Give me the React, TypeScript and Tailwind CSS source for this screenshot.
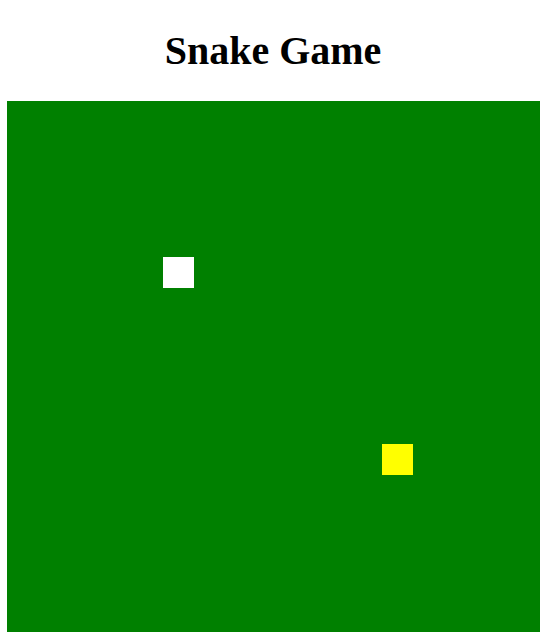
export default function App() {
  return (
    <div className="w-[540px] h-[632px] overflow-hidden bg-white">
      <div className="h-[101px] flex items-center justify-center pl-[6px]">
        <h1
          className="text-[40px] font-bold text-black leading-none"
          style={{ fontFamily: '"Liberation Serif", "Times New Roman", serif' }}
        >
          Snake Game
        </h1>
      </div>
      <div className="relative ml-[7px] w-[600px] h-[600px] bg-[#008000]">
        {/* snake head */}
        <div className="absolute left-[156px] top-[156px] w-[31px] h-[31px] bg-white" />
        {/* food */}
        <div className="absolute left-[375px] top-[343px] w-[31px] h-[31px] bg-[#ffff00]" />
      </div>
    </div>
  );
}
